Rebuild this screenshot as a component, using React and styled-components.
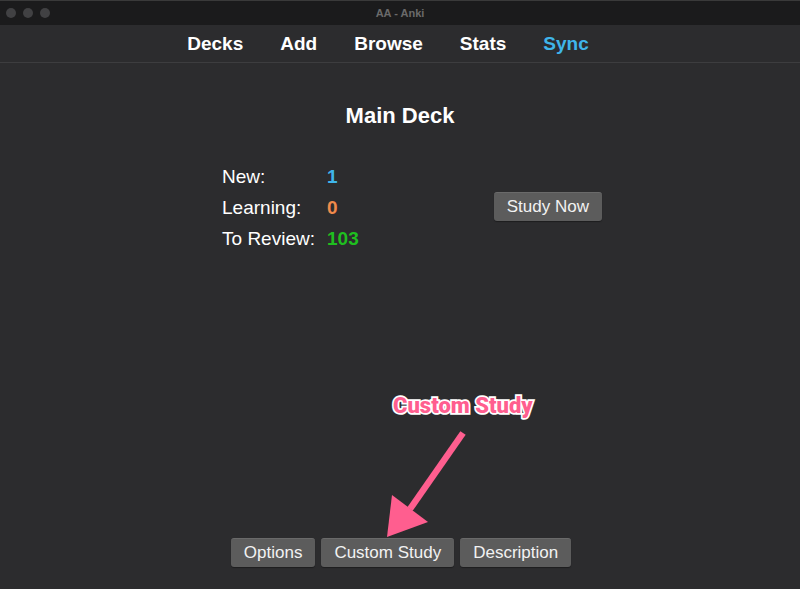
import styled, { createGlobalStyle } from "styled-components";

const GlobalStyle = createGlobalStyle`
html, body {
  margin: 0;
  padding: 0;
  background: #2c2c2e;
}
body {
  font-family: "Liberation Sans", Arial, sans-serif;
}
`;

const Window = styled.div`
position: relative;
display: flex;
flex-direction: column;
width: 800px;
height: 589px;
background: #2c2c2e;
overflow: hidden;
`;

const TitleBar = styled.div`
position: relative;
height: 25px;
background: #1b1b1c;
border-top: 1px solid #3a3a3a;
box-sizing: border-box;
display: flex;
align-items: center;
justify-content: center;
`;

const Lights = styled.div`
position: absolute;
left: 6px;
top: 7px;
display: flex;
gap: 7px;
`;

const Light = styled.span`
width: 10px;
height: 10px;
border-radius: 50%;
background: #414143;
`;

const WindowTitle = styled.span`
font-size: 11px;
color: #6a6a6a;
font-weight: 600;
`;

const NavBar = styled.nav`
height: 37px;
display: flex;
align-items: center;
justify-content: center;
gap: 37px;
border-bottom: 1px solid #3d3d3f;
padding-right: 24px;
`;

const NavItem = styled.span`
font-size: 19px;
font-weight: 700;
color: ${(p) => (p.active ? "#3fb5ea" : "#ffffff")};
`;

const Main = styled.main`
flex: 1;
display: flex;
flex-direction: column;
align-items: center;
`;

const DeckTitle = styled.h1`
margin: 40px 0 0;
font-size: 22px;
font-weight: 700;
color: #ffffff;
`;

const Overview = styled.div`
margin-top: 36px;
display: flex;
align-items: center;
gap: 135px;
padding-left: 24px;
`;

const Stats = styled.div`
display: grid;
grid-template-columns: 105px auto;
row-gap: 8px;
font-size: 19px;
line-height: 23px;
`;

const Label = styled.span`
color: #ffffff;
`;

const Count = styled.span`
font-weight: 700;
color: ${(p) => p.color};
`;

const Button = styled.button`
height: 29px;
padding: 0 13px;
margin-top: ${(p) => (p.lift ? "-2px" : "0")};
font-family: "Liberation Sans", Arial, sans-serif;
font-size: 17px;
color: #f2f2f2;
background: #5c5c5c;
border: none;
border-top: 1px solid #6a6a6a;
border-radius: 3px;
box-shadow: 0 1px 1px rgba(0, 0, 0, 0.35);
cursor: pointer;
`;

const Spacer = styled.div`
flex: 1;
`;

const Footer = styled.div`
display: flex;
gap: 6px;
padding-bottom: 22px;
padding-left: 2px;
`;

const Note = styled.span`
position: absolute;
left: 393px;
top: 393px;
font-family: Roboto, "Liberation Sans", sans-serif;
font-size: 22px;
font-weight: 900;
color: #ff5e8f;
-webkit-text-stroke: 3.5px #ffffff;
paint-order: stroke fill;
`;

const Arrow = styled.svg`
position: absolute;
left: 380px;
top: 425px;
`;

export default function App() {
  return (
    <>
      <GlobalStyle />
      <Window>
        <TitleBar>
          <Lights>
            <Light />
            <Light />
            <Light />
          </Lights>
          <WindowTitle>AA - Anki</WindowTitle>
        </TitleBar>
        <NavBar>
          <NavItem>Decks</NavItem>
          <NavItem>Add</NavItem>
          <NavItem>Browse</NavItem>
          <NavItem>Stats</NavItem>
          <NavItem active>Sync</NavItem>
        </NavBar>
        <Main>
          <DeckTitle>Main Deck</DeckTitle>
          <Overview>
            <Stats>
              <Label>New:</Label>
              <Count color="#3fb5ea">1</Count>
              <Label>Learning:</Label>
              <Count color="#f08a4b">0</Count>
              <Label>To Review:</Label>
              <Count color="#1fbf1f">103</Count>
            </Stats>
            <Button lift>Study Now</Button>
          </Overview>
          <Spacer />
          <Footer>
            <Button>Options</Button>
            <Button>Custom Study</Button>
            <Button>Description</Button>
          </Footer>
        </Main>
        <Note>Custom Study</Note>
        <Arrow width="100" height="120" viewBox="0 0 100 120">
          <line x1="83" y1="8" x2="30" y2="84" stroke="#ff5e8f" strokeWidth="6.5" strokeLinecap="butt" />
          <polygon points="12,70 7,112 48,97" fill="#ff5e8f" />
        </Arrow>
      </Window>
    </>
  );
}
